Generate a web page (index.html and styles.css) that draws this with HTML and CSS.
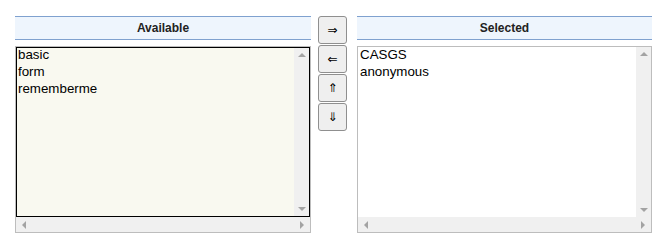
FILE: index.html
```html
<!DOCTYPE html>
<html lang="en">

<head>
    <meta charset="UTF-8">
    <title>Role chooser</title>
    <link rel="stylesheet" href="styles.css">
</head>

<body>
    <div class="chooser">
        <div class="column">
            <div class="column-title">Available</div>
            <div class="list-frame">
                <div class="list focused">
                    <div class="list-body">
                        <div class="list-item">basic</div>
                        <div class="list-item">form</div>
                        <div class="list-item">rememberme</div>
                    </div>
                    <div class="vscroll">
                        <span class="tri up"></span>
                        <span class="tri down"></span>
                    </div>
                </div>
                <div class="hscroll">
                    <span class="tri left"></span>
                    <span class="tri right"></span>
                </div>
            </div>
        </div>

        <div class="buttons">
            <button class="move-btn" title="Add">&rArr;</button>
            <button class="move-btn" title="Remove">&lArr;</button>
            <button class="move-btn" title="Up">&uArr;</button>
            <button class="move-btn" title="Down">&dArr;</button>
        </div>

        <div class="column narrow">
            <div class="column-title">Selected</div>
            <div class="list-frame">
                <div class="list white">
                    <div class="list-body">
                        <div class="list-item">CASGS</div>
                        <div class="list-item">anonymous</div>
                    </div>
                    <div class="vscroll">
                        <span class="tri up"></span>
                        <span class="tri down"></span>
                    </div>
                </div>
                <div class="hscroll">
                    <span class="tri left"></span>
                    <span class="tri right"></span>
                </div>
            </div>
        </div>
    </div>
</body>

</html>
```

FILE: styles.css
```css
body {
    margin: 0;
    padding: 16px 0 0 15px;
    font-family: 'Liberation Sans', Arial, sans-serif;
    color: #111;
    background-color: #fff;
}

.chooser {
    display: flex;
    align-items: flex-start;
}

.column {
    width: 296px;
    display: flex;
    flex-direction: column;
}

.column.narrow {
    width: 295px;
}

.column-title {
    height: 22px;
    line-height: 22px;
    text-align: center;
    font-size: 12px;
    font-weight: bold;
    color: #222;
    background-color: #eef5fd;
    border-top: 1px solid #7fa1cf;
    border-bottom: 1px solid #7fa1cf;
    margin-bottom: 6px;
}

.list-frame {
    border: 1px solid #bdbdbd;
    height: 187px;
    box-sizing: border-box;
    display: flex;
    flex-direction: column;
}

.list {
    height: 170px;
    box-sizing: border-box;
    display: flex;
    font-size: 13.33px;
}

.list.focused {
    border: 1px solid #000;
    background-color: #f9f9f0;
}

.list.white {
    background-color: #fff;
}

.list-body {
    flex: 1;
    padding-left: 1px;
}

.list.white .list-body {
    padding: 1px 0 0 2px;
}

.list-item {
    line-height: 13px;
    padding-bottom: 4px;
    white-space: nowrap;
    color: #000;
}

.vscroll {
    width: 15px;
    background-color: #f0f0f0;
    display: flex;
    flex-direction: column;
    justify-content: space-between;
    align-items: center;
    padding: 5px 0;
}

.hscroll {
    height: 15px;
    background-color: #f0f0f0;
    display: flex;
    justify-content: space-between;
    align-items: center;
    padding: 0 6px;
}

.tri {
    width: 0;
    height: 0;
    border-style: solid;
    border-color: transparent;
}

.tri.up {
    border-width: 0 4px 4px 4px;
    border-bottom-color: #a3a3a3;
}

.tri.down {
    border-width: 4px 4px 0 4px;
    border-top-color: #a3a3a3;
}

.tri.left {
    border-width: 4px 4px 4px 0;
    border-right-color: #a3a3a3;
}

.tri.right {
    border-width: 4px 0 4px 4px;
    border-left-color: #a3a3a3;
}

.buttons {
    display: flex;
    flex-direction: column;
    gap: 1px;
    margin: 0 10px 0 7px;
}

.move-btn {
    width: 29px;
    height: 28px;
    padding: 0;
    font-family: 'DejaVu Sans', sans-serif;
    font-size: 12px;
    color: #000;
    background-color: #efefef;
    border: 1px solid #8f8f8f;
    border-radius: 3px;
}
```
